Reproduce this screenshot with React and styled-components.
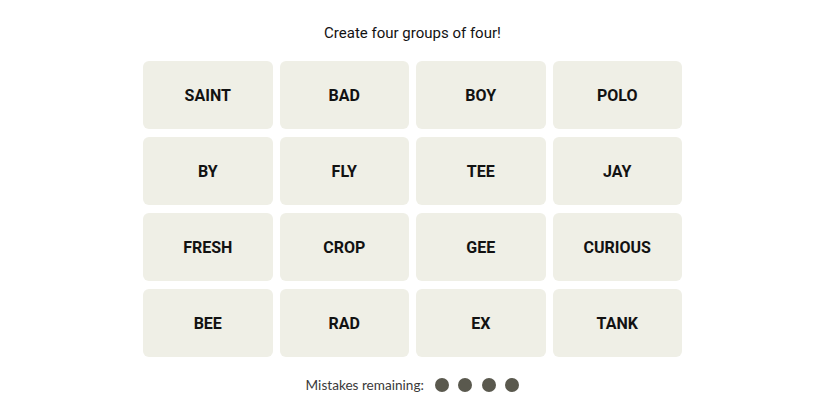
import React from 'react';
import styled, { createGlobalStyle } from 'styled-components';

const Global = createGlobalStyle`
  body {
    margin: 0;
    background: #fff;
    font-family: "Libre Franklin", Roboto, "Liberation Sans", sans-serif;
  }
`;

const Page = styled.div`
  width: 825px;
  height: 413px;
  display: flex;
  flex-direction: column;
  align-items: center;
  padding-top: 23px;
  box-sizing: border-box;
`;

const Title = styled.p`
  margin: 0 0 18px;
  font-size: 15px;
  line-height: 20px;
  color: #121212;
  font-family: Roboto, "Liberation Sans", sans-serif;
`;

const Board = styled.div`
  width: 539px;
  display: grid;
  grid-template-columns: repeat(4, 1fr);
  grid-auto-rows: 68px;
  column-gap: 7px;
  row-gap: 8px;
`;

const Tile = styled.button`
  border: none;
  border-radius: 6px;
  background: #efefe6;
  color: #121212;
  font-family: Roboto, "Liberation Sans", sans-serif;
  font-weight: 700;
  font-size: 16px;
  text-transform: uppercase;
  cursor: pointer;
`;

const Footer = styled.div`
  display: flex;
  align-items: center;
  margin-top: 20px;
  gap: 11px;
  font-family: Lato, "Liberation Sans", sans-serif;
  font-size: 13.6px;
  color: #3a3a3a;
`;

const Dots = styled.div`
  display: flex;
  gap: 9.5px;
`;

const Dot = styled.span`
  width: 14px;
  height: 14px;
  border-radius: 50%;
  background: #5a594e;
`;

const words = [
  'Saint', 'Bad', 'Boy', 'Polo',
  'By', 'Fly', 'Tee', 'Jay',
  'Fresh', 'Crop', 'Gee', 'Curious',
  'Bee', 'Rad', 'Ex', 'Tank',
];

export default function App() {
  return (
    <>
      <Global />
      <Page>
        <Title>Create four groups of four!</Title>
        <Board>
          {words.map((w) => (
            <Tile key={w}>{w}</Tile>
          ))}
        </Board>
        <Footer>
          Mistakes remaining:
          <Dots>
            {[0, 1, 2, 3].map((i) => (
              <Dot key={i} />
            ))}
          </Dots>
        </Footer>
      </Page>
    </>
  );
}
